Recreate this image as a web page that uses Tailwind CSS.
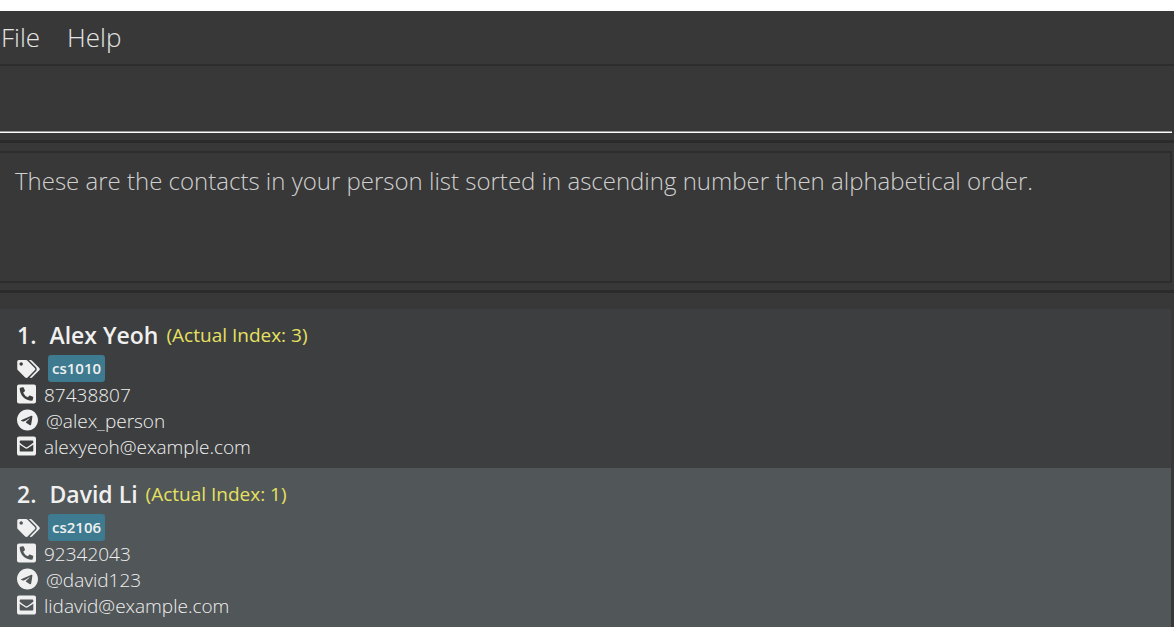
<!DOCTYPE html>
<html lang="en">
<head>
<meta charset="utf-8">
<meta name="viewport" content="width=device-width, initial-scale=1">
<title>Contacts</title>
<script src="https://cdn.jsdelivr.net/npm/@tailwindcss/browser@4"></script>
</head>
<body class="flex min-h-screen flex-col bg-white pt-[11px] font-['Open_Sans',sans-serif]">
<svg class="hidden" aria-hidden="true">
  <symbol id="tags" viewBox="0 0 640 512"><path d="M497.941 225.941L286.059 14.059A48 48 0 0 0 252.118 0H48C21.49 0 0 21.49 0 48v204.118a48 48 0 0 0 14.059 33.941l211.882 211.882c18.744 18.745 49.136 18.746 67.882 0l204.118-204.118c18.745-18.745 18.745-49.137 0-67.882zM112 160c-26.51 0-48-21.49-48-48s21.49-48 48-48 48 21.49 48 48-21.49 48-48 48zm513.941 133.823L421.823 497.941c-18.745 18.745-49.137 18.745-67.882 0l-.36-.36L527.64 323.522c16.999-16.999 26.362-39.6 26.362-63.64s-9.362-46.641-26.362-63.64L331.397 0h48.721a48 48 0 0 1 33.941 14.059l211.882 211.882c18.745 18.745 18.745 49.137 0 67.882z"/></symbol>
  <symbol id="phone" viewBox="0 0 448 512" preserveAspectRatio="xMinYMid"><path d="M400 32H48A48 48 0 0 0 0 80v352a48 48 0 0 0 48 48h352a48 48 0 0 0 48-48V80a48 48 0 0 0-48-48zm-16.39 307.37l-15 65A15 15 0 0 1 354 416C194 416 64 286.29 64 126a15.7 15.7 0 0 1 11.63-14.61l65-15A18.23 18.23 0 0 1 144 96a16.27 16.27 0 0 1 13.79 9.09l30 70A17.9 17.9 0 0 1 189 181a17 17 0 0 1-5.5 11.61l-37.89 31a231.91 231.91 0 0 0 110.78 110.78l31-37.89A17 17 0 0 1 299 291a17.85 17.85 0 0 1 5.91 1.21l70 30A16.25 16.25 0 0 1 384 336a17.41 17.41 0 0 1-.39 3.37z"/></symbol>
  <symbol id="telegram" viewBox="0 0 496 512" preserveAspectRatio="xMinYMid"><path d="M248,8C111.033,8,0,119.033,0,256S111.033,504,248,504,496,392.967,496,256,384.967,8,248,8ZM362.952,176.66c-3.732,39.215-19.881,134.378-28.1,178.3-3.476,18.584-10.322,24.816-16.948,25.425-14.4,1.326-25.338-9.517-39.287-18.661-21.827-14.308-34.158-23.215-55.346-37.177-24.485-16.135-8.612-25,5.342-39.5,3.652-3.793,67.107-61.51,68.335-66.746.153-.655.3-3.1-1.154-4.384s-3.59-.849-5.135-.5q-3.283.746-104.608,69.142-14.845,10.194-26.894,9.934c-8.855-.191-25.888-5.006-38.551-9.123-15.531-5.048-27.875-7.717-26.8-16.291q.84-6.7,18.45-13.7,108.446-47.248,144.628-62.3c68.872-28.647,83.183-33.623,92.511-33.789,2.052-.034,6.639.474,9.61,2.885a10.452,10.452,0,0,1,3.53,6.716A43.765,43.765,0,0,1,362.952,176.66Z"/></symbol>
  <symbol id="mail" viewBox="0 0 448 512" preserveAspectRatio="xMinYMid"><path d="M400 32H48C21.49 32 0 53.49 0 80v352c0 26.51 21.49 48 48 48h352c26.51 0 48-21.49 48-48V80c0-26.51-21.49-48-48-48zM178.117 262.104C87.429 196.287 88.353 196.121 64 177.167V152c0-13.255 10.745-24 24-24h272c13.255 0 24 10.745 24 24v25.167c-24.371 18.969-23.434 19.124-114.117 84.938-10.5 7.655-31.392 26.12-45.883 25.894-14.503.218-35.367-18.227-45.883-25.895zM384 217.775V360c0 13.255-10.745 24-24 24H88c-13.255 0-24-10.745-24-24V217.775c13.958 10.794 33.329 25.236 95.303 70.214 14.162 10.341 37.975 32.145 64.697 32.01 26.887.134 51.036-22.041 64.72-32.025 61.958-44.964 81.325-59.406 95.28-70.199z"/></symbol>
</svg>
<div class="flex grow flex-col bg-[#383838]">
  <nav class="flex h-[55px] gap-[27px] border-b-2 border-[#2d2d2d] px-px pb-px text-[26px] font-light text-[#e4e4e4]">
    <button type="button">File</button>
    <button type="button">Help</button>
  </nav>
  <div class="border-b-3 border-[#2b2b2b] pr-0.5 pb-[7px]">
    <input type="text" aria-label="Command" class="block h-[67px] w-full border-b border-white px-4 text-[24px] font-light text-white shadow-[inset_0_-1px_#999999] outline-none">
  </div>
  <div class="border-b-3 border-[#2b2b2b] pt-2 pr-0.5 pb-[7px]">
    <textarea readonly aria-label="Result" class="block h-[132px] w-full resize-none border-2 border-l-0 border-[#2d2d2d] px-[15px] py-2.5 text-[24px] leading-9 font-light text-[#d0d0d0] outline-none">These are the contacts in your person list sorted in ascending number then alphabetical order.</textarea>
  </div>
  <ol class="mt-4 mr-[3px] text-[19px] font-[360] text-[#f0f0f0]">
    <li class="bg-[#3c3e3f] px-[17px] pt-[7px] pb-2">
      <h2 class="flex h-[39px] items-center"><span class="text-[23px] font-semibold">1.</span><span class="ml-[13px] text-[23px] font-semibold">Alex Yeoh</span><span class="ml-2 font-normal text-[#e6e161]">(Actual Index: 3)</span></h2>
      <div class="flex h-[27px] items-center gap-2"><svg class="h-[18px] w-[23px] fill-[#f0f0f0]"><use href="#tags"/></svg><span class="rounded-[3px] bg-[#3e7b91] px-1 text-[15px] leading-[27px] font-semibold">cs1010</span></div>
      <div class="flex h-[26px] items-center gap-2"><svg class="mb-0.5 h-[22px] w-[19px] fill-[#f0f0f0]"><use href="#phone"/></svg>87438807</div>
      <div class="flex h-[26px] items-center gap-2"><svg class="mb-0.5 h-[22px] w-[21px] fill-[#f0f0f0]"><use href="#telegram"/></svg>@alex_person</div>
      <div class="flex h-[26px] items-center gap-2"><svg class="mb-0.5 h-[22px] w-[19px] fill-[#f0f0f0]"><use href="#mail"/></svg>alexyeoh@example.com</div>
    </li>
    <li class="bg-[#515658] px-[17px] pt-[7px] pb-2">
      <h2 class="flex h-[39px] items-center"><span class="text-[23px] font-semibold">2.</span><span class="ml-[13px] text-[23px] font-semibold">David Li</span><span class="ml-2 font-normal text-[#e6e161]">(Actual Index: 1)</span></h2>
      <div class="flex h-[27px] items-center gap-2"><svg class="h-[18px] w-[23px] fill-[#f0f0f0]"><use href="#tags"/></svg><span class="rounded-[3px] bg-[#3e7b91] px-1 text-[15px] leading-[27px] font-semibold">cs2106</span></div>
      <div class="flex h-[26px] items-center gap-2"><svg class="mb-0.5 h-[22px] w-[19px] fill-[#f0f0f0]"><use href="#phone"/></svg>92342043</div>
      <div class="flex h-[26px] items-center gap-2"><svg class="mb-0.5 h-[22px] w-[21px] fill-[#f0f0f0]"><use href="#telegram"/></svg>@david123</div>
      <div class="flex h-[26px] items-center gap-2"><svg class="mb-0.5 h-[22px] w-[19px] fill-[#f0f0f0]"><use href="#mail"/></svg>lidavid@example.com</div>
    </li>
  </ol>
</div>
</body>
</html>
